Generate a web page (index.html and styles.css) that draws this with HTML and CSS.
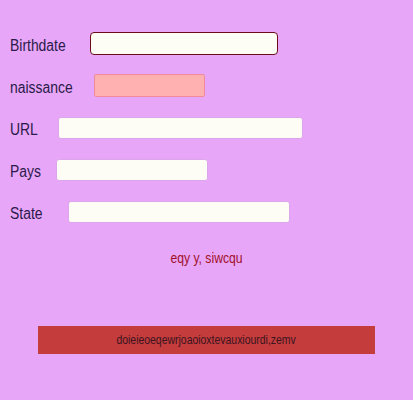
FILE: index.html
```html
<!DOCTYPE html>
<html>
<head>
<meta charset="utf-8">
<link rel="stylesheet" href="styles.css">
</head>
<body>
<form class="form">
  <div class="row"><label class="lbl l-birth"><span class="nar">Birthdate</span></label><input class="inp i-birth" type="text"></div>
  <div class="row"><label class="lbl l-nais"><span class="nar">naissance</span></label><input class="inp i-nais" type="text"></div>
  <div class="row"><label class="lbl l-url"><span class="nar">URL</span></label><input class="inp i-url" type="text"></div>
  <div class="row"><label class="lbl l-pays"><span class="nar">Pays</span></label><input class="inp i-pays" type="text"></div>
  <div class="row"><label class="lbl l-state"><span class="nar">State</span></label><input class="inp i-state" type="text"></div>
  <p class="note"><span class="nar mid">eqy y, siwcqu</span></p>
  <div class="bar"><span class="nar mid">doieieoeqewrjoaoioxtevauxiourdi,zemv</span></div>
</form>
</body>
</html>
```
FILE: styles.css
```css
html, body {
  margin: 0;
  padding: 0;
  background: #e8a6f8;
}
body {
  font-family: "Liberation Sans", Arial, sans-serif;
  color: #2a1a4a;
}
.nar {
  display: inline-block;
  transform: scaleX(0.87);
  transform-origin: left center;
}
.nar.mid {
  transform-origin: center center;
}
.form {
  display: flex;
  flex-direction: column;
  padding: 32px 0 0 10px;
}
.row {
  display: flex;
  align-items: center;
  height: 23px;
  margin-bottom: 19px;
}
.lbl {
  font-size: 16px;
  padding-top: 4px;
}
.inp {
  box-sizing: border-box;
  height: 22px;
  margin: 0;
  padding: 0;
  background: #fdfdf6;
  border: 1px solid #dca6ea;
  border-radius: 3px;
}
.l-birth { width: 80px; }
.i-birth { width: 188px; height: 23px; border: 1px solid #6b0b1a; border-radius: 4px; }
.l-nais { width: 84px; }
.i-nais { width: 111px; height: 23px; background: #ffb0b0; border: 1px solid #f08c9a; border-radius: 2px; }
.l-url { width: 48px; }
.i-url { width: 245px; }
.l-pays { width: 46px; }
.i-pays { width: 152px; }
.l-state { width: 58px; }
.i-state { width: 222px; }
.note {
  margin: 8px 0 0 0;
  text-align: center;
  font-size: 14px;
  color: #a0102a;
  width: 393px;
}
.bar {
  margin: 60px 0 0 28px;
  width: 337px;
  height: 28px;
  background: #c43c3c;
  color: #3a1420;
  font-size: 12px;
  display: flex;
  align-items: center;
  justify-content: center;
}
```
